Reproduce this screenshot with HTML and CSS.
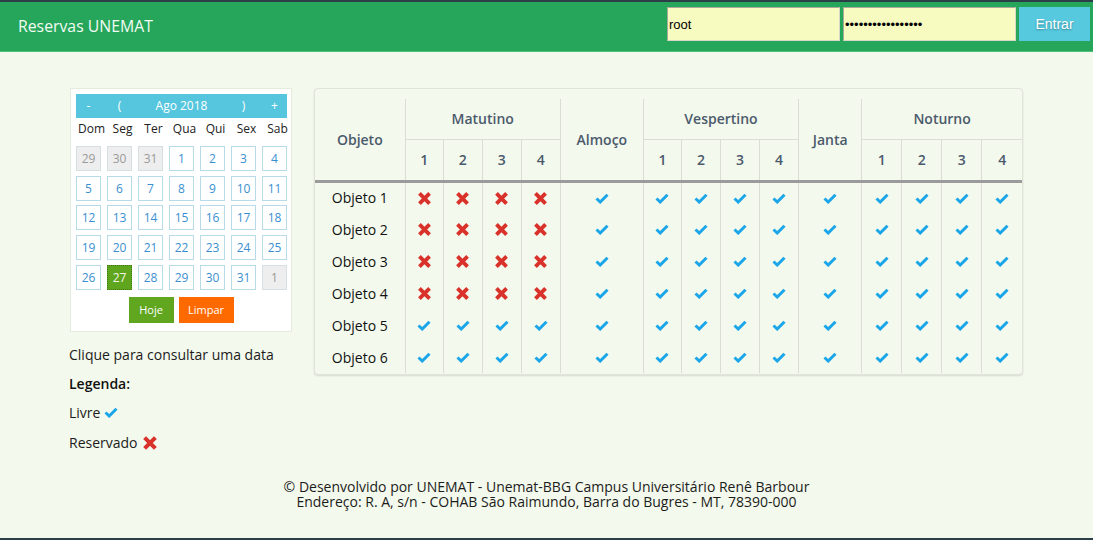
FILE: index.html
```html
<!DOCTYPE html>
<html lang="pt-BR">
<head>
<meta charset="utf-8">
<title>Reservas UNEMAT</title>
<link rel="stylesheet" href="styles.css">
</head>
<body>
<header class="topbar">
  <div class="brand">Reservas UNEMAT</div>
  <form class="login">
    <input class="field" type="text" value="root">
    <input class="field" type="password" value="aaaaaaaaaaaaaaaaa">
    <button class="btn-entrar" type="button">Entrar</button>
  </form>
</header>

<main class="content">
  <aside class="side">
    <div class="calendar">
      <div class="cal-head">
        <span>-</span><span>(</span><span class="cal-month">Ago 2018</span><span>)</span><span>+</span>
      </div>
      <div class="cal-days">
        <span>Dom</span><span>Seg</span><span>Ter</span><span>Qua</span><span>Qui</span><span>Sex</span><span>Sab</span>
      </div>
      <div class="cal-grid">
        <span class="day off">29</span><span class="day off">30</span><span class="day off">31</span><span class="day">1</span><span class="day">2</span><span class="day">3</span><span class="day">4</span>
        <span class="day">5</span><span class="day">6</span><span class="day">7</span><span class="day">8</span><span class="day">9</span><span class="day">10</span><span class="day">11</span>
        <span class="day">12</span><span class="day">13</span><span class="day">14</span><span class="day">15</span><span class="day">16</span><span class="day">17</span><span class="day">18</span>
        <span class="day">19</span><span class="day">20</span><span class="day">21</span><span class="day">22</span><span class="day">23</span><span class="day">24</span><span class="day">25</span>
        <span class="day">26</span><span class="day sel">27</span><span class="day">28</span><span class="day">29</span><span class="day">30</span><span class="day">31</span><span class="day off">1</span>
      </div>
      <div class="cal-actions">
        <button class="btn-hoje" type="button">Hoje</button>
        <button class="btn-limpar" type="button">Limpar</button>
      </div>
    </div>
    <p class="hint">Clique para consultar uma data</p>
    <p class="legend-title">Legenda:</p>
    <p class="legend-item">Livre <svg class="ico-ok" viewBox="0 0 14 11"><path d="M1.5 5.5 L5.2 9 L12.5 1.8"/></svg></p>
    <p class="legend-item second">Reservado <svg class="ico-no big" viewBox="0 0 14 14"><path d="M2.3 2.3 L11.7 11.7 M11.7 2.3 L2.3 11.7"/></svg></p>
  </aside>

  <section class="panel">
    <table class="grid">
      <colgroup>
        <col class="c-obj">
        <col class="c-s1"><col class="c-s"><col class="c-s"><col class="c-s">
        <col class="c-alm">
        <col class="c-s1"><col class="c-s"><col class="c-s"><col class="c-s">
        <col class="c-jan">
        <col class="c-n"><col class="c-n"><col class="c-n"><col class="c-n">
      </colgroup>
      <thead>
        <tr class="h1">
          <th rowspan="2" class="first">Objeto</th>
          <th colspan="4" class="grp">Matutino</th>
          <th rowspan="2">Almoço</th>
          <th colspan="4" class="grp">Vespertino</th>
          <th rowspan="2">Janta</th>
          <th colspan="4" class="grp">Noturno</th>
        </tr>
        <tr class="h2">
          <th>1</th><th>2</th><th>3</th><th>4</th>
          <th>1</th><th>2</th><th>3</th><th>4</th>
          <th>1</th><th>2</th><th>3</th><th>4</th>
        </tr>
      </thead>
      <tbody id="rows"></tbody>
    </table>
  </section>
</main>

<footer class="foot">
  <p>© Desenvolvido por UNEMAT - Unemat-BBG Campus Universitário Renê Barbour</p>
  <p>Endereço: R. A, s/n - COHAB São Raimundo, Barra do Bugres - MT, 78390-000</p>
</footer>

<script src="app.js"></script>
</body>
</html>
```

FILE: app.js
```js
(function () {
  var ok = '<svg class="ico-ok" viewBox="0 0 14 11"><path d="M1.5 5.5 L5.2 9 L12.5 1.8"/></svg>';
  var no = '<svg class="ico-no" viewBox="0 0 14 14"><path d="M2.3 2.3 L11.7 11.7 M11.7 2.3 L2.3 11.7"/></svg>';
  var body = document.getElementById('rows');
  var html = '';
  for (var i = 1; i <= 6; i++) {
    html += '<tr><td class="first">Objeto ' + i + '</td>';
    for (var c = 0; c < 14; c++) {
      var reserved = i <= 4 && c < 4;
      html += '<td>' + (reserved ? no : ok) + '</td>';
    }
    html += '</tr>';
  }
  body.innerHTML = html;
})();
```

FILE: styles.css
```css
* { box-sizing: border-box; }

html, body { margin: 0; padding: 0; }

body {
  font-family: "Open Sans", "Noto Sans", sans-serif;
  font-size: 14px;
  color: #222;
  background: #f3f9ec;
  min-height: 540px;
  border-top: 2px solid #2c3e48;
  border-bottom: 2px solid #2c3e48;
  display: flex;
  flex-direction: column;
}

/* ---------- top bar ---------- */
.topbar {
  height: 50px;
  background: #26a65b;
  border-bottom: 1px solid #4fbf7c;
  display: flex;
  align-items: flex-start;
  justify-content: space-between;
  padding: 0 3px 0 18px;
}

.brand {
  color: #f2fbf4;
  font-size: 15.8px;
  line-height: 48px;
}

.login {
  display: flex;
  gap: 3px;
  margin: 5px 0 0;
}

.field {
  width: 173px;
  height: 34px;
  margin: 0;
  padding: 0 1px;
  background: #f8fbc0;
  border: 1px solid #a9a99a;
  border-right-color: #d8d8c8;
  border-bottom-color: #d8d8c8;
  font-family: "Liberation Sans", Arial, sans-serif;
  font-size: 13px;
  color: #000;
}

.btn-entrar {
  width: 71px;
  height: 34px;
  margin: 0;
  border: 0;
  background: #56c9df;
  color: #fff;
  font-family: "Liberation Sans", Arial, sans-serif;
  font-size: 14px;
  text-shadow: 0 1px 2px rgba(0, 0, 0, .35);
}

/* ---------- content ---------- */
.content {
  display: flex;
  align-items: flex-start;
  gap: 22px;
  padding: 36px 0 0 70px;
}

.side {
  width: 222px;
}

.calendar {
  background: #fff;
  border: 1px solid #e4ecde;
  padding: 5px 5px 8px;
}

.cal-head {
  display: grid;
  grid-template-columns: repeat(7, 25px);
  column-gap: 6px;
  width: 211px;
  height: 24px;
  background: #56c6de;
  color: #fff;
  font-size: 12px;
  line-height: 24px;
  text-align: center;
}

.cal-head span { display: block; }
.cal-month { grid-column: span 3; }

.cal-days {
  display: grid;
  grid-template-columns: repeat(7, 31px);
  font-size: 12px;
  line-height: 22px;
  text-align: center;
  color: #222;
  margin: 0 -3px 6px 0;
}

.cal-grid {
  display: grid;
  grid-template-columns: repeat(7, 25px);
  grid-auto-rows: 25px;
  column-gap: 6px;
  row-gap: 4.7px;
}

.day {
  display: flex;
  align-items: center;
  justify-content: center;
  border: 1px solid #b8dbe8;
  background: #fff;
  color: #3b8fd0;
  font-size: 12px;
}

.day.off {
  background: #eeeeee;
  color: #9a9a9a;
  border-color: #d6dfe2;
}

.day.sel {
  background: #5fa61e;
  color: #f4f4e6;
  border: 1px dotted #3f7a12;
}

.cal-actions {
  display: flex;
  justify-content: center;
  gap: 5px;
  margin-top: 7px;
}

.cal-actions button {
  height: 26px;
  border: 0;
  margin: 0;
  padding: 0;
  color: #fff;
  font-family: "Open Sans", sans-serif;
  font-size: 11px;
}

.btn-hoje { width: 45px; background: #60a61f; }
.btn-limpar { width: 55px; background: #ff6a00; }

.side p {
  margin: 0;
  font-size: 14px;
  line-height: 20px;
  color: #1c1c1c;
}

.hint { padding-top: 13px; margin-left: -1px !important; }
.legend-title { font-weight: 600; margin-top: 9px !important; margin-left: -1px !important; color: #111 !important; }
.legend-item { margin-top: 9px !important; margin-left: -1px !important; display: flex; align-items: center; gap: 4px; }
.legend-item.second { margin-top: 10px !important; }

/* ---------- icons ---------- */
.ico-ok {
  width: 14px;
  height: 11px;
  fill: none;
  stroke: #1ba6ea;
  stroke-width: 3;
  stroke-linejoin: miter;
  vertical-align: middle;
}

.ico-no {
  width: 15px;
  height: 15px;
  fill: none;
  stroke: #d9322b;
  stroke-width: 3.6;
  stroke-linecap: butt;
  vertical-align: middle;
}

.ico-no.big { width: 16px; height: 16px; }

/* ---------- table ---------- */
.panel {
  width: 709px;
  background: #f3f9ec;
  border: 1px solid #dfe3da;
  border-radius: 4px;
  box-shadow: 0 1px 2px rgba(0, 0, 0, .12);
  padding: 10px 0 1px;
}

.grid {
  width: 707px;
  border-collapse: collapse;
  table-layout: fixed;
}

.c-obj { width: 90px; }
.c-s1 { width: 38px; }
.c-s { width: 39px; }
.c-alm { width: 83px; }
.c-jan { width: 63px; }
.c-n { width: 40px; }

.grid th {
  font-weight: 600;
  color: #4c5a6d;
  font-size: 14px;
  text-align: center;
  vertical-align: middle;
  border-left: 1px solid #dcdcd6;
  padding: 0;
}

.grid th.first { border-left: 0; }

.h1 th { height: 40px; }
.h1 th.grp { border-bottom: 1px solid #dcdcd6; }
.h2 th { height: 42px; }

.h1 th[rowspan],
.h2 th { border-bottom: 3px solid #9b9b9b; }

.grid td {
  height: 32px;
  padding: 0;
  text-align: center;
  vertical-align: middle;
  border-left: 1px solid #dcdcd6;
  color: #111;
  font-size: 14px;
}

.grid td.first { border-left: 0; }

.grid td svg { display: inline-block; margin-top: -2px; }

/* ---------- footer ---------- */
.foot {
  margin-top: auto;
  padding-bottom: 29px;
  text-align: center;
  color: #1c1c1c;
}

.foot p {
  margin: 0;
  font-size: 14px;
  line-height: 15px;
}
```
